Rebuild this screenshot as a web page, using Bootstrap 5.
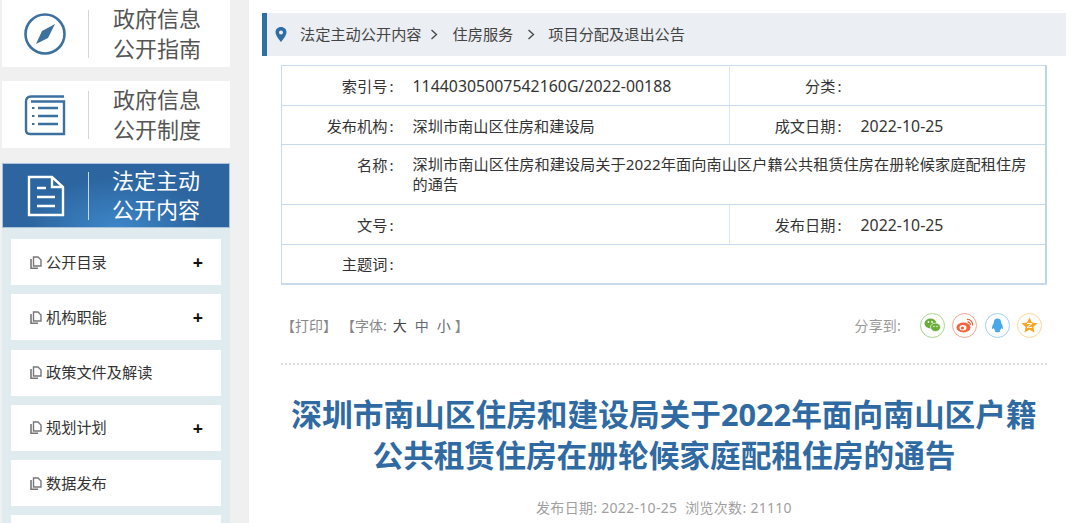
<!DOCTYPE html>
<html lang="zh-CN">
<head>
<meta charset="utf-8">
<title>通告</title>
<link rel="stylesheet" href="https://cdn.jsdelivr.net/npm/bootstrap@5.3.0/dist/css/bootstrap.min.css">
<style>
html,body{height:523px;overflow:hidden}
body{font-family:"Noto Sans","Noto Sans CJK SC",sans-serif;background:#fff;color:#333}
.shell{height:523px;overflow:hidden}
.side{width:249px;flex:none;background:#f0f0f0;padding:0 19px 0 2px}
.tile{height:67px;background:#fff;margin-bottom:14px;color:#555}
.tile-on{height:65px;margin:15px 0 0;color:#fff;background:radial-gradient(ellipse 90px 50px at 50% 100%,#3d86c9,#2c659f);border:1px solid #a9c3dc}
.tile-ico{width:86px;flex:none;text-align:center}
.tile-on .tile-ico{width:85px}
.tile-sep{width:1px;height:48px;background:#d6d6d6;flex:none}
.tile-on .tile-sep{background:#c5d6e8}
.tile-txt{font-size:22px;line-height:29.500px;padding-left:24px;white-space:nowrap}
.tile-on .tile-txt{padding-left:23px;margin-top:-1px}
.tree{background:#e0ebf0;padding:11px 9px 0;height:300px}
.leaf{height:46px;background:#fff;margin-bottom:9.300px;padding:0 19px;font-size:15.200px;color:#333}
.leaf-plus{font-size:18px;color:#111;font-weight:700;line-height:1;margin-right:-1px}
.main{flex:1;min-width:0;padding:13px 14px 0 13px}
.crumb{height:43px;background:#ebeef2;border-left:5px solid #2f6ea5;padding-left:8px;font-size:15.200px;color:#444;margin-bottom:9px}
.crumb-a{padding-left:13px}
.crumb-b{margin:0 15px 0 8px;width:8px}
.crumb-c{margin:0 13px 0 14px;width:8px}
.meta{width:766px;margin:0 0 0 19px;table-layout:fixed;border:1px solid #c7dbec;border-right:2px solid #bcd5ea;border-bottom:2px solid #c7dbec;font-size:15.200px}
.meta td{border:1px solid #c7dbec;padding:2px 0 0;height:39.700px;vertical-align:middle;color:#333}
.meta td.k{text-align:right;padding-right:19px;white-space:nowrap;border-right:0}
.meta td.v{padding-right:18px;line-height:20px;border-left:0}
.meta td.split{border-right:1px solid #dae7f2}
.meta td.lng{height:59.500px;vertical-align:top;padding-top:9px;letter-spacing:.05px}
.cln{margin-left:2px}
.num{font-size:15.800px;letter-spacing:.05px}
.tools{margin:0 19px;height:80px;border-bottom:2px dotted #ddd;color:#888;font-size:14px;padding-top:12px}
.tools b{font-weight:400;color:#444}
.tool-l{margin-top:18px}
.tool-r{margin-top:16px;padding-right:1px}
.fz{margin:0 4px}
b.fz{margin-left:6px}
.fz-mid{color:#667}
.shr{color:#999;font-size:14px;margin:1px 11px 0 0;letter-spacing:.2px}
.roundel{width:25px;height:25px;border-radius:50%;border:1px solid;margin-left:7.500px;background:#fff;padding:0}
.headline{margin:29px 0 0 19px;width:766px;text-align:center;font-size:30.700px;line-height:41.500px;font-weight:700;color:#2f6aa3;white-space:nowrap}
.sub{margin-left:19px;width:766px;margin-top:20px;font-size:14px;text-align:center;color:#a0a0a0;letter-spacing:.3px}
</style>
</head>
<body>
<div class="shell d-flex">
  <aside class="side">
    <div class="tile d-flex align-items-center">
      <div class="tile-ico"><svg width="42" height="42" viewBox="0 0 42 42" fill="none"><circle cx="21" cy="21" r="19.500" stroke="#3b709f" stroke-width="2.600"/><path d="M31 11 L24 25 L12 31 L18 18Z" fill="#3b709f"/></svg></div>
      <div class="tile-sep"></div>
      <div class="tile-txt">政府信息<br>公开指南</div>
    </div>
    <div class="tile d-flex align-items-center">
      <div class="tile-ico"><svg width="42" height="42" viewBox="0 0 42 42" fill="none" stroke="#3b709f"><path d="M40 2.500H7Q2 2.500 2 7.500V36Q2 40 6 40H40V7.500H7" stroke-width="2.400"/><path d="M14 14H34M14 22H34M14 30H34" stroke-width="2.400"/><path d="M8 14h2.500M8 22h2.500M8 30h2.500" stroke-width="2.200"/></svg></div>
      <div class="tile-sep"></div>
      <div class="tile-txt">政府信息<br>公开制度</div>
    </div>
    <div class="tile tile-on d-flex align-items-center">
      <div class="tile-ico"><svg width="38" height="42" viewBox="0 0 38 42" fill="none" stroke="#fff" stroke-width="2.400"><path d="M2 2H25L36 12V40H2Z"/><path d="M25 2V12H36"/><path d="M10 13H19M10 22H28M10 31H28"/></svg></div>
      <div class="tile-sep"></div>
      <div class="tile-txt">法定主动<br>公开内容</div>
    </div>
    <div class="tree">
      <div class="leaf d-flex align-items-center"><svg class="me-1" width="12" height="13" viewBox="0 0 12 13" fill="none" stroke="#777" stroke-width="1.400"><path d="M3.500 1H8L11 4V10H3.500Z"/><path d="M1 3V12.200H8" stroke-width="1.600"/></svg>公开目录<span class="leaf-plus ms-auto">+</span></div>
      <div class="leaf d-flex align-items-center"><svg class="me-1" width="12" height="13" viewBox="0 0 12 13" fill="none" stroke="#777" stroke-width="1.400"><path d="M3.500 1H8L11 4V10H3.500Z"/><path d="M1 3V12.200H8" stroke-width="1.600"/></svg>机构职能<span class="leaf-plus ms-auto">+</span></div>
      <div class="leaf d-flex align-items-center"><svg class="me-1" width="12" height="13" viewBox="0 0 12 13" fill="none" stroke="#777" stroke-width="1.400"><path d="M3.500 1H8L11 4V10H3.500Z"/><path d="M1 3V12.200H8" stroke-width="1.600"/></svg>政策文件及解读</div>
      <div class="leaf d-flex align-items-center"><svg class="me-1" width="12" height="13" viewBox="0 0 12 13" fill="none" stroke="#777" stroke-width="1.400"><path d="M3.500 1H8L11 4V10H3.500Z"/><path d="M1 3V12.200H8" stroke-width="1.600"/></svg>规划计划<span class="leaf-plus ms-auto">+</span></div>
      <div class="leaf d-flex align-items-center"><svg class="me-1" width="12" height="13" viewBox="0 0 12 13" fill="none" stroke="#777" stroke-width="1.400"><path d="M3.500 1H8L11 4V10H3.500Z"/><path d="M1 3V12.200H8" stroke-width="1.600"/></svg>数据发布</div>
      <div class="leaf"></div>
    </div>
  </aside>
  <main class="main">
    <div class="crumb d-flex align-items-center">
      <svg width="12" height="15" viewBox="0 0 12 15"><path fill-rule="evenodd" d="M6 0C2.700 0 .5 2.400.5 5.300.5 9 6 15 6 15s5.500-6 5.500-9.700C11.500 2.400 9.300 0 6 0Zm0 3.500a2 2 0 1 1 0 4 2 2 0 0 1 0-4Z" fill="#2f6ea5"/></svg>
      <span class="crumb-a">法定主动公开内容</span>
      <svg class="crumb-b" height="11" viewBox="0 0 8 11" fill="none" stroke="#444" stroke-width="1.300"><path d="M1.500 1l5 4.500-5 4.500"/></svg>
      <span>住房服务</span>
      <svg class="crumb-c" height="11" viewBox="0 0 8 11" fill="none" stroke="#444" stroke-width="1.300"><path d="M1.500 1l5 4.500-5 4.500"/></svg>
      <span>项目分配及退出公告</span>
    </div>
    <table class="meta">
      <colgroup><col style="width:131px"><col style="width:317px"><col style="width:131px"><col></colgroup>
      <tr><td class="k">索引号<span class="cln">:</span></td><td class="v split"><span class="num">11440305007542160G/2022-00188</span></td><td class="k">分类<span class="cln">:</span></td><td class="v"></td></tr>
      <tr><td class="k">发布机构<span class="cln">:</span></td><td class="v split">深圳市南山区住房和建设局</td><td class="k">成文日期<span class="cln">:</span></td><td class="v"><span class="num">2022-10-25</span></td></tr>
      <tr><td class="k lng">名称<span class="cln">:</span></td><td class="v lng" colspan="3">深圳市南山区住房和建设局关于2022年面向南山区户籍公共租赁住房在册轮候家庭配租住房的通告</td></tr>
      <tr><td class="k">文号<span class="cln">:</span></td><td class="v split"></td><td class="k">发布日期<span class="cln">:</span></td><td class="v"><span class="num">2022-10-25</span></td></tr>
      <tr><td class="k">主题词<span class="cln">:</span></td><td class="v" colspan="3"></td></tr>
    </table>
    <div class="tools d-flex align-items-start">
      <div class="tool-l d-flex align-items-center"><span>【打印】</span><span class="ms-1">【字体:</span><b class="fz">大</b><span class="fz fz-mid">中</span><span class="fz fz-mid">小</span><span>】</span></div>
      <div class="tool-r d-flex align-items-center ms-auto me-1">
        <span class="shr">分享到:</span>
        <span class="roundel d-flex align-items-center justify-content-center" style="border-color:#a5d98a"><svg width="17" height="15" viewBox="0 0 17 15"><ellipse cx="6.500" cy="5.500" rx="6" ry="5" fill="#6aae3a"/><ellipse cx="11.500" cy="9.300" rx="5" ry="4.200" fill="#6aae3a" stroke="#fff" stroke-width=".7"/><circle cx="4.500" cy="4" r=".9" fill="#fff"/><circle cx="8" cy="4" r=".9" fill="#fff"/><circle cx="10" cy="8.500" r=".7" fill="#fff"/><circle cx="13" cy="8.500" r=".7" fill="#fff"/></svg></span>
        <span class="roundel d-flex align-items-center justify-content-center" style="border-color:#f8a78d"><svg width="18" height="15" viewBox="0 0 18 15" fill="none"><ellipse cx="7.500" cy="9.500" rx="7" ry="5" fill="#f2643c"/><ellipse cx="7" cy="9.800" rx="3.500" ry="2.700" fill="#fff"/><circle cx="6.500" cy="10" r="1.600" fill="#f2643c"/><path d="M11 1.500a5 5 0 0 1 5.500 6M11.500 4a2.500 2.500 0 0 1 2.700 3" stroke="#f2643c" stroke-width="1.300"/></svg></span>
        <span class="roundel d-flex align-items-center justify-content-center" style="border-color:#9dd3f5"><svg width="13" height="15" viewBox="0 0 15 18"><path d="M7.500 .5C4.300.5 3 3 3 6 2 8 .5 10.500 1 13c.5 1 1.500-.5 2-1 .3 1.500 1 2.500 2 3.300C4 16 4 17 6 17h3c2 0 2-1 1-1.700 1-.8 1.700-1.800 2-3.300.5.500 1.500 2 2 1 .5-2.500-1-5-2-7 0-3-1.300-5.500-4.500-5.500Z" fill="#4ba8e8"/></svg></span>
        <span class="roundel d-flex align-items-center justify-content-center" style="border-color:#fcd795"><svg width="17" height="16" viewBox="0 0 17 16"><path d="M8.500 .5l2.400 5 5.600.7-4.100 3.800 1.100 5.500-5-2.700-5 2.700 1.100-5.500L.5 6.200l5.600-.7Z" fill="#f6a623"/><path d="M6 6.500h5l-5 3.800h5" stroke="#fff" stroke-width="1" fill="none"/></svg></span>
      </div>
    </div>
    <h1 class="headline">深圳市南山区住房和建设局关于2022年面向南山区户籍<br>公共租赁住房在册轮候家庭配租住房的通告</h1>
    <div class="sub">发布日期: 2022-10-25&nbsp;&nbsp;浏览次数: 21110</div>
  </main>
</div>
<script src="https://cdn.jsdelivr.net/npm/bootstrap@5.3.0/dist/js/bootstrap.bundle.min.js"></script>
</body>
</html>
